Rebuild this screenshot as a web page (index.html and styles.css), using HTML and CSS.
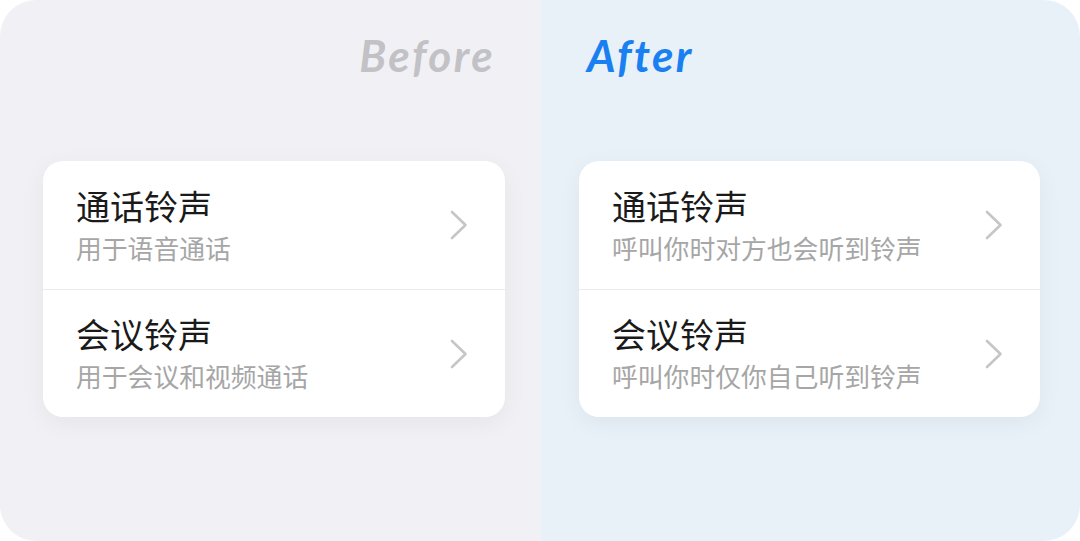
FILE: index.html
```html
<!DOCTYPE html>
<html lang="zh-CN">
<head>
    <meta charset="UTF-8">
    <meta name="viewport" content="width=device-width, initial-scale=1.0">
    <title>铃声设置 Before / After</title>
    <link rel="stylesheet" href="styles.css">
</head>
<body>

    <div class="compare">

        <!-- Before -->
        <section class="panel panel-before">
            <h2 class="label">Before</h2>
            <div class="card">
                <div class="row">
                    <div class="row-text">
                        <div class="row-title">通话铃声</div>
                        <div class="row-sub">用于语音通话</div>
                    </div>
                    <svg class="chevron" viewBox="0 0 20 30"><path d="M3 2 L16.5 15 L3 28"/></svg>
                </div>
                <div class="row">
                    <div class="row-text">
                        <div class="row-title">会议铃声</div>
                        <div class="row-sub">用于会议和视频通话</div>
                    </div>
                    <svg class="chevron" viewBox="0 0 20 30"><path d="M3 2 L16.5 15 L3 28"/></svg>
                </div>
            </div>
        </section>

        <!-- After -->
        <section class="panel panel-after">
            <h2 class="label">After</h2>
            <div class="card">
                <div class="row">
                    <div class="row-text">
                        <div class="row-title">通话铃声</div>
                        <div class="row-sub">呼叫你时对方也会听到铃声</div>
                    </div>
                    <svg class="chevron" viewBox="0 0 20 30"><path d="M3 2 L16.5 15 L3 28"/></svg>
                </div>
                <div class="row">
                    <div class="row-text">
                        <div class="row-title">会议铃声</div>
                        <div class="row-sub">呼叫你时仅你自己听到铃声</div>
                    </div>
                    <svg class="chevron" viewBox="0 0 20 30"><path d="M3 2 L16.5 15 L3 28"/></svg>
                </div>
            </div>
        </section>

    </div>

</body>
</html>
```

FILE: styles.css
```css
/* General */
body {
    margin: 0;
    padding: 0;
    background: #ffffff;
    font-family: "Noto Sans CJK SC", "Noto Sans", sans-serif;
}

/* Two halves, rounded outer frame */
.compare {
    display: flex;
    width: 1080px;
    height: 541px;
    border-radius: 36px;
    overflow: hidden;
}

.panel {
    display: flex;
    flex-direction: column;
    box-sizing: border-box;
}

.panel-before {
    background: #f1f1f5;
    padding: 0 36px 0 43px;
    width: 541px;
}

.panel-after {
    background: #e9f1f8;
    padding: 0 40px 0 38px;
    width: 539px;
}

/* Before / After labels */
.label {
    margin: 29px 0 0 0;
    height: 52px;
    line-height: 52px;
    font-family: "Lato", "Liberation Sans", sans-serif;
    font-size: 44px;
    font-weight: 700;
    font-style: italic;
    letter-spacing: 2.4px;
}

.panel-before .label {
    text-align: right;
    padding-right: 10px;
    color: #c2c2c6;
}

.panel-after .label {
    padding-left: 8px;
    color: #1a80f2;
}

/* Card */
.card {
    margin-top: 80px;
    background: #ffffff;
    border-radius: 20px;
    box-shadow: 0 6px 24px rgba(0, 0, 0, 0.05);
    overflow: hidden;
}

.row {
    height: 128px;
    display: flex;
    align-items: center;
    justify-content: space-between;
    padding: 0 36px 0 33px;
}

.row + .row {
    border-top: 1px solid #ebebeb;
    height: 127px;
}

.row-title {
    font-size: 34px;
    line-height: 40px;
    color: #1a1a1a;
}

.row-sub {
    margin-top: 5px;
    font-size: 25.8px;
    line-height: 34px;
    color: #a6a6a6;
}

.chevron {
    width: 20px;
    height: 30px;
    fill: none;
    stroke: #c6c6c6;
    stroke-width: 2.6;
    stroke-linecap: round;
    stroke-linejoin: round;
}
```
